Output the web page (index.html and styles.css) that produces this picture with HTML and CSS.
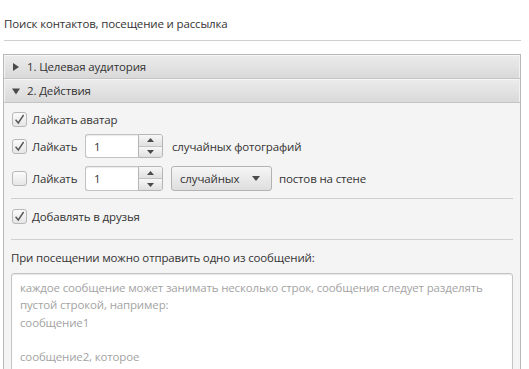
FILE: index.html
```html
<!DOCTYPE html>
<html lang="ru">
<head>
<meta charset="utf-8">
<link rel="stylesheet" href="styles.css">
</head>
<body>
<div class="page">
  <div class="title">Поиск контактов, посещение и рассылка</div>
  <div class="rule"></div>
  <div class="accordion">
    <div class="pane-header">
      <svg class="arrow" width="8" height="8" viewBox="0 0 8 8"><path d="M1 0 L7 4 L1 8 Z" fill="#4a4a4a"/></svg>
      <span>1. Целевая аудитория</span>
    </div>
    <div class="pane-header">
      <svg class="arrow" width="8" height="8" viewBox="0 0 8 8"><path d="M0 1.5 L8 1.5 L4 7.5 Z" fill="#4a4a4a"/></svg>
      <span>2. Действия</span>
    </div>
    <div class="pane-content">
      <div class="row r1">
        <label class="check">
          <span class="box"><svg width="13" height="13" viewBox="0 0 13 13"><path d="M2.6 6.8 L5.3 10 L10.6 2" fill="none" stroke="#555555" stroke-width="1.4"/></svg></span>
          <span>Лайкать аватар</span>
        </label>
      </div>
      <div class="row r2">
        <label class="check fixed">
          <span class="box"><svg width="13" height="13" viewBox="0 0 13 13"><path d="M2.6 6.8 L5.3 10 L10.6 2" fill="none" stroke="#555555" stroke-width="1.4"/></svg></span>
          <span>Лайкать</span>
        </label>
        <div class="spinner">
          <div class="spin-field">1</div>
          <div class="spin-buttons">
            <div class="spin-btn"><svg width="7" height="4" viewBox="0 0 7 4"><path d="M0 4 L3.5 0 L7 4 Z" fill="#4a4a4a"/></svg></div>
            <div class="spin-btn"><svg width="7" height="4" viewBox="0 0 7 4"><path d="M0 0 L7 0 L3.5 4 Z" fill="#4a4a4a"/></svg></div>
          </div>
        </div>
        <span class="after-spin">случайных фотографий</span>
      </div>
      <div class="row r3">
        <label class="check fixed">
          <span class="box"></span>
          <span>Лайкать</span>
        </label>
        <div class="spinner tall">
          <div class="spin-field">1</div>
          <div class="spin-buttons">
            <div class="spin-btn"><svg width="7" height="4" viewBox="0 0 7 4"><path d="M0 4 L3.5 0 L7 4 Z" fill="#4a4a4a"/></svg></div>
            <div class="spin-btn"><svg width="7" height="4" viewBox="0 0 7 4"><path d="M0 0 L7 0 L3.5 4 Z" fill="#4a4a4a"/></svg></div>
          </div>
        </div>
        <div class="choice">
          <span>случайных</span>
          <svg width="8" height="5" viewBox="0 0 8 5"><path d="M0 0 L8 0 L4 5 Z" fill="#4a4a4a"/></svg>
        </div>
        <span class="after-choice">постов на стене</span>
      </div>
      <div class="sep s1"></div>
      <div class="row r4">
        <label class="check">
          <span class="box"><svg width="13" height="13" viewBox="0 0 13 13"><path d="M2.6 6.8 L5.3 10 L10.6 2" fill="none" stroke="#555555" stroke-width="1.4"/></svg></span>
          <span>Добавлять в друзья</span>
        </label>
      </div>
      <div class="sep s2"></div>
      <div class="msg-label">При посещении можно отправить одно из сообщений:</div>
      <div class="textarea">
        <div class="ph">каждое сообщение может занимать несколько строк, сообщения следует разделять</div>
        <div class="ph">пустой строкой, например:</div>
        <div class="ph">сообщение1</div>
        <div class="ph">&nbsp;</div>
        <div class="ph">сообщение2, которое</div>
        <div class="ph">&nbsp;</div>
      </div>
    </div>
  </div>
</div>
</body>
</html>
```
FILE: styles.css
```css
html, body {
  margin: 0;
  padding: 0;
  background: #ffffff;
  height: 369px;
  overflow: hidden;
}
body {
  font-family: "Open Sans", "Noto Sans", sans-serif;
  font-size: 11.5px;
  letter-spacing: -0.15px;
  color: #333333;
}
.page {
  padding: 0 8px 0 3px;
}
.title {
  padding: 16px 0 0 1px;
  height: 40px;
  line-height: 16px;
  box-sizing: border-box;
}
.rule {
  height: 1px;
  background: #cfcfcf;
  margin: 0 0 13px 1px;
  width: 517px;
}
.accordion {
  width: 518px;
  box-sizing: border-box;
  border: 1px solid #b9b9b9;
  border-bottom: none;
  background: #f4f4f4;
  height: 320px;
}
.pane-header {
  height: 24px;
  box-sizing: border-box;
  border-bottom: 1px solid #c4c4c4;
  background: linear-gradient(#ececec, #d9d9d9);
  box-shadow: inset 0 1px 0 #f6f6f6, inset 1px 0 0 #f2f2f2, inset -1px 0 0 #f2f2f2;
  display: flex;
  align-items: center;
  padding-left: 8px;
}
.arrow {
  margin-right: 7px;
}
.pane-content {
  padding: 7px 7px 0 7px;
}
.row {
  display: flex;
  align-items: center;
}
.r1 { height: 18px; }
.r2 { height: 24px; margin-top: 6px; }
.r3 { height: 25px; margin-top: 8px; }
.r4 { height: 18px; margin-top: 8px; }
.check {
  display: flex;
  align-items: center;
}
.check.fixed {
  width: 74px;
}
.box {
  width: 15px;
  height: 15px;
  box-sizing: border-box;
  border: 1px solid #b8b8b8;
  border-radius: 3px;
  background: linear-gradient(#fbfbfb, #e6e6e6);
  margin: 0 5px 0 1px;
  display: flex;
  align-items: center;
  justify-content: center;
}
.spinner {
  display: flex;
  height: 24px;
}
.spinner.tall { height: 25px; }
.spin-field {
  width: 53px;
  box-sizing: border-box;
  border: 1px solid #c2c2c2;
  border-right: none;
  border-radius: 3px 0 0 3px;
  background: #ffffff;
  box-shadow: inset 0 1px 1px #ececec;
  padding-left: 8px;
  display: flex;
  align-items: center;
}
.spin-buttons {
  width: 25px;
  display: flex;
  flex-direction: column;
  box-sizing: border-box;
  border: 1px solid #b5b5b5;
  border-radius: 0 3px 3px 0;
  overflow: hidden;
}
.spin-btn {
  flex: 1;
  display: flex;
  align-items: center;
  justify-content: center;
  background: linear-gradient(#f7f7f7, #e0e0e0);
}
.spin-btn + .spin-btn {
  border-top: 1px solid #c3c3c3;
}
.after-spin {
  margin-left: 9px;
}
.choice {
  margin-left: 8px;
  width: 101px;
  height: 25px;
  box-sizing: border-box;
  border: 1px solid #b3b3b3;
  border-radius: 3px;
  background: linear-gradient(#f6f6f6, #dedede);
  display: flex;
  align-items: center;
  justify-content: space-between;
  padding: 0 11px 0 8px;
}
.after-choice {
  margin-left: 7px;
}
.sep {
  height: 1px;
  background: #cfcfcf;
  width: 502px;
}
.s1 { margin-top: 7px; }
.s2 { margin-top: 14px; }
.msg-label {
  margin-top: 10px;
  height: 16px;
  line-height: 16px;
}
.textarea {
  margin-top: 7px;
  width: 502px;
  box-sizing: border-box;
  border: 1px solid #c4c4c4;
  border-radius: 3px 3px 0 0;
  background: #ffffff;
  box-shadow: inset 0 1px 1px #e6e6e6;
  padding: 5px 8px 0 8px;
  color: #a3a3a3;
  line-height: 17.3px;
}
.ph {
  white-space: nowrap;
}
```
